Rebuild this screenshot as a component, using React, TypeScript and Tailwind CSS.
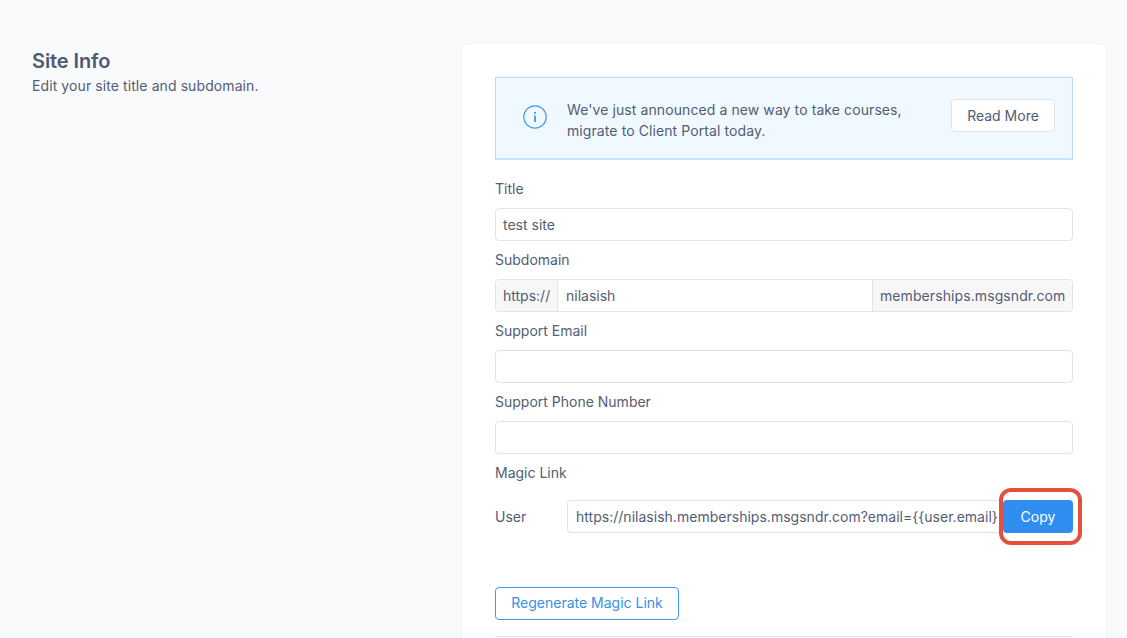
const font = "font-['Inter',sans-serif]";

const Label = ({ children }: { children: string }) => (
  <div className="h-[38px] pb-[1px] text-sm leading-[20px] text-[#525d73] flex items-center">{children}</div>
);

const Field = ({ label, value }: { label: string; value?: string }) => (
  <div>
    <Label>{label}</Label>
    <div className="h-[33px] rounded border border-[#e2e3e8] bg-white pl-[7px] text-sm text-[#525d73] flex items-center">{value}</div>
  </div>
);

export default function App() {
  return (
    <div className={`${font} h-[638px] overflow-hidden bg-[#f9fafc] flex items-start`}>
      <div className="w-[462px] shrink-0 pl-[32px] pt-[49px]">
        <h2 className="text-[20px] leading-[24px] font-semibold tracking-[-0.1px] text-[#4f5a70]">Site Info</h2>
        <p className="text-sm leading-[20px] mt-[3px] tracking-[0.09px] text-[#525d73]">Edit your site title and subdomain.</p>
      </div>

      <div className="mt-[44px] w-[644px] h-[640px] shrink-0 rounded-md bg-white shadow-[0_0_3px_rgba(0,0,0,0.06)] px-[33px] pt-[33px]">
        <div className="h-[83px] border border-[#b3dcfd] border-b-2 border-b-[#c6e5fd] bg-[#f0f9ff] flex items-center pl-[27px] pr-[17px]">
          <svg width="24" height="24" viewBox="0 0 24 24" fill="none" className="shrink-0 mb-[3px]">
            <circle cx="12" cy="12" r="11.2" stroke="#3f97f0" strokeWidth="1.2" />
            <rect x="11.1" y="10.5" width="1.8" height="6.5" fill="#3f97f0" />
            <rect x="11.1" y="7" width="1.8" height="1.8" fill="#3f97f0" />
          </svg>
          <p className="ml-[20px] mt-[3px] flex-1 text-sm leading-[21px] tracking-[0.09px] text-[#525d73]">
            We've just announced a new way to take courses,
            <br />
            migrate to Client Portal today.
          </p>
          <button className="h-[33px] w-[104px] mb-[5px] rounded border border-[#e2e3e8] bg-white text-sm text-[#525d73]">Read More</button>
        </div>

        <div className="mt-[10px]">
          <Field label="Title" value="test site" />

          <Label>Subdomain</Label>
          <div className="h-[33px] rounded border border-[#e2e3e8] flex text-sm text-[#525d73] overflow-hidden">
            <div className="w-[62px] shrink-0 bg-[#f7f7f8] border-r border-[#e2e3e8] pl-[7px] flex items-center">https://</div>
            <div className="flex-1 pl-[8px] flex items-center">nilasish</div>
            <div className="w-[200px] shrink-0 bg-[#f7f7f8] border-l border-[#e2e3e8] pl-[7px] tracking-[0.09px] flex items-center">memberships.msgsndr.com</div>
          </div>

          <Field label="Support Email" />
          <Field label="Support Phone Number" />

          <Label>Magic Link</Label>
          <div className="mt-[8px] flex items-center text-sm text-[#525d73]">
            <div className="w-[72px] shrink-0">User</div>
            <div className="h-[33px] w-[434px] shrink-0 rounded-l border border-r-0 border-[#e2e3e8] pl-2 pr-[4px] flex items-center">
              <span className="block overflow-hidden whitespace-nowrap leading-[20px] tracking-[0.02px]">https://nilasish.memberships.msgsndr.com?email={"{{user.email}}"}</span>
            </div>
            <div className="relative ml-[2px]">
              <button className="block h-[33px] w-[70px] rounded bg-[#2f8eef] text-sm text-white">Copy</button>
              <div className="absolute left-[-4px] top-[-12px] h-[57px] w-[83px] rounded-[12px] border-4 border-[#e4503b]" />
            </div>
          </div>

          <button className="mt-[54px] block h-[33px] w-[184px] pb-[1px] rounded border border-[#3f97f0] bg-white text-sm text-[#3a8fe8]">Regenerate Magic Link</button>
          <div className="mt-[16px] h-px bg-[#e2e3e8]" />
        </div>
      </div>
    </div>
  );
}
